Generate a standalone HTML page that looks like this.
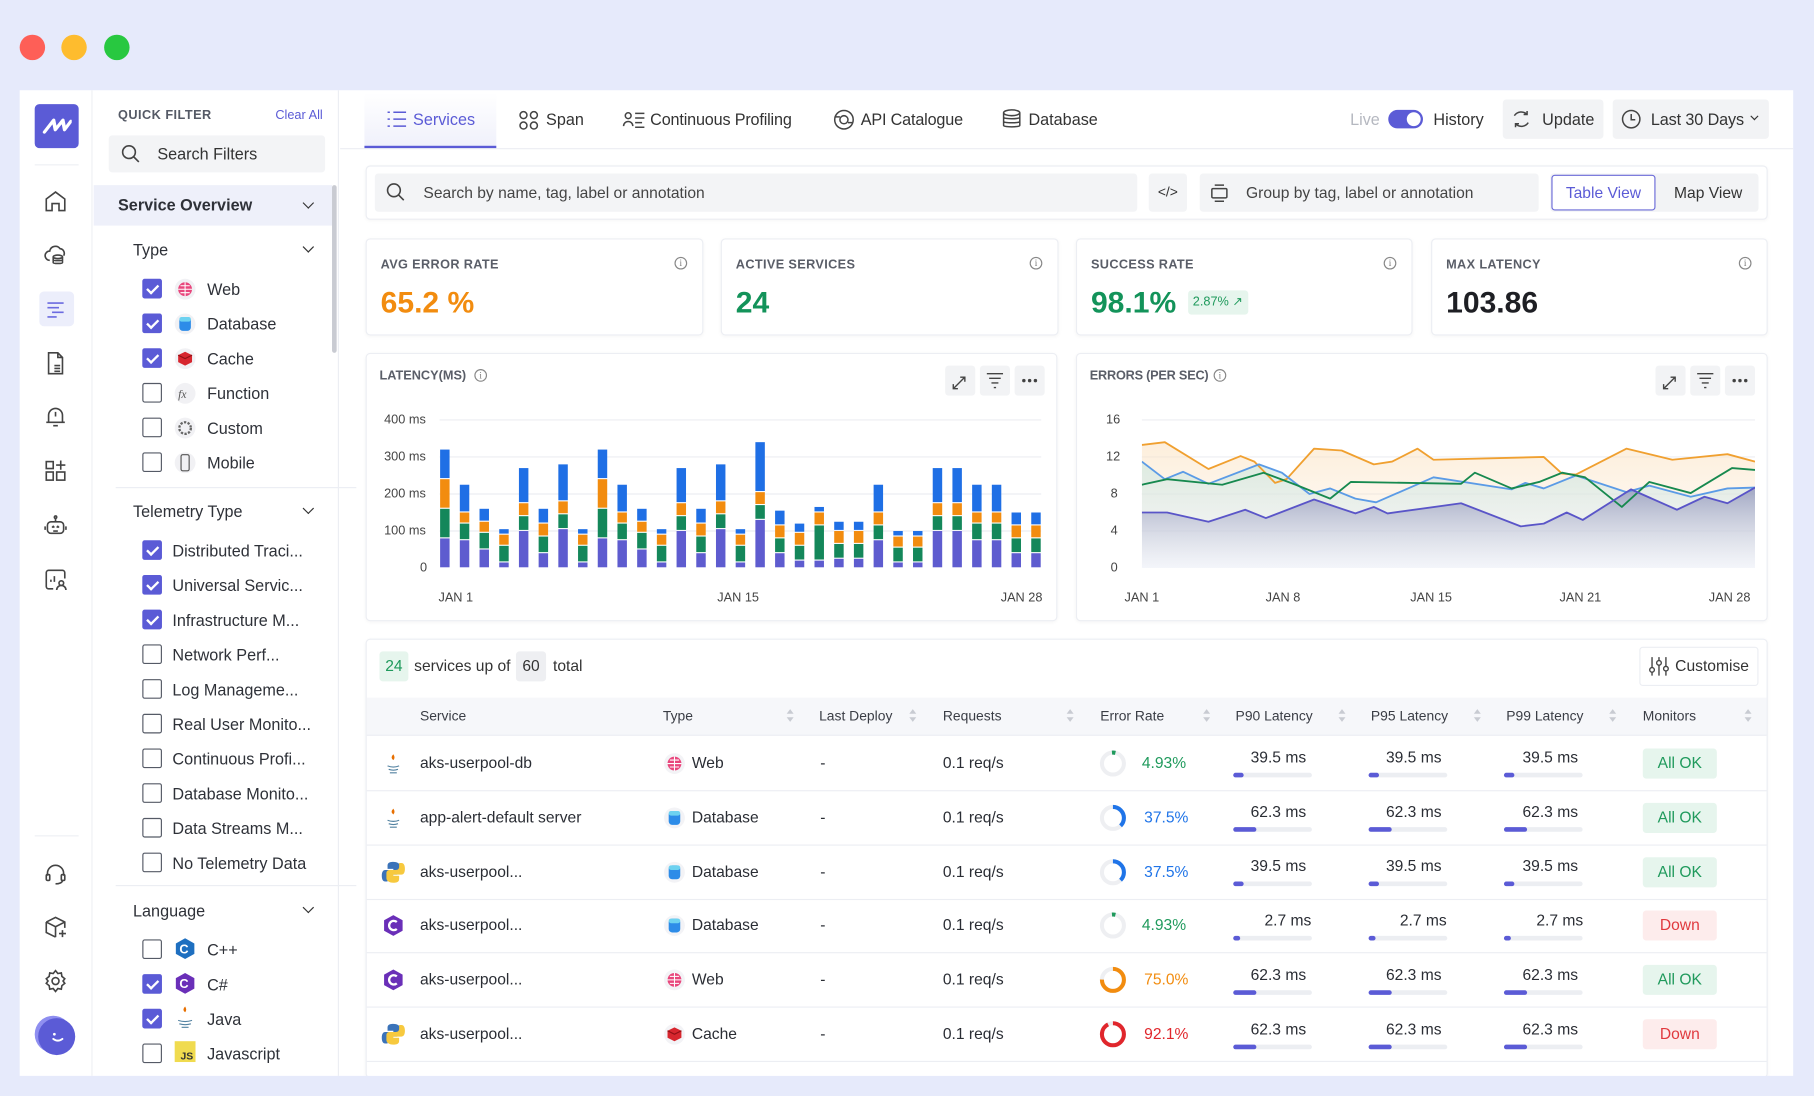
<!DOCTYPE html>
<html><head><meta charset="utf-8">
<style>
*{box-sizing:border-box;margin:0;padding:0}
html,body{width:1814px;height:1096px;overflow:hidden;background:#e6eafb;font-family:"Liberation Sans",sans-serif;color:#2a2d34}
#w{position:absolute;left:0;top:0;width:1568px;height:947px;transform:scale(1.15689);transform-origin:0 0}
.a{position:absolute}
.dot{position:absolute;width:22px;height:22px;border-radius:50%;top:30px}
.app{left:17px;top:78px;width:1533px;height:852px;background:#fff}
.rail{left:17px;top:78px;width:63px;height:852px;border-right:1px solid #eef0f4}
.ic{position:absolute;left:36px;width:24px;height:24px}
.fp{left:81px;top:78px;width:212px;height:852px;border-right:1px solid #eceef3}
.cb{position:absolute;left:123px;width:17px;height:17px;border:1.3px solid #555a66;border-radius:2px;background:#fff}
.cb.on{background:#5b5bd6;border-color:#5b5bd6}
.cb.on:after{content:"";position:absolute;left:4.5px;top:1.5px;width:4px;height:8px;border:solid #fff;border-width:0 2px 2px 0;transform:rotate(45deg)}
.lab{position:absolute;font-size:14px;color:#2e3138}
.hd{position:absolute;left:115px;font-size:14px;color:#2e3138}
.chev{position:absolute;left:263px;width:7px;height:7px;border:solid #333;border-width:0 1.6px 1.6px 0;transform:rotate(45deg)}
.card{position:absolute;background:#fff;border:1px solid #eceef3;border-radius:4px;box-shadow:0 1px 3px rgba(0,0,0,.04)}
.st{font-size:11px;font-weight:bold;color:#5a5e68;letter-spacing:.3px;position:absolute;left:12px;top:16px}
.sv{position:absolute;left:12px;top:39px;font-size:26px;font-weight:bold}
.info{position:absolute;width:11px;height:11px;border:1px solid #888;border-radius:50%;font-size:8px;line-height:9px;text-align:center;color:#777;font-family:"Liberation Serif",serif}
.btn{position:absolute;width:26px;height:26px;background:#f2f3f5;border-radius:3px}
.th{position:absolute;top:612px;font-size:12px;color:#3a3d45}
.sort{position:absolute;top:613px;width:6px;height:12px}
.sort:before,.sort:after{content:"";position:absolute;left:0;border-left:3px solid transparent;border-right:3px solid transparent}
.sort:before{top:0;border-bottom:4px solid #c8cbd2}
.sort:after{top:7px;border-top:4px solid #c8cbd2}
.cell{position:absolute;font-size:13.5px;color:#2a2d34}
.pb{position:absolute;width:68px;height:4px;background:#eceef2;border-radius:2px}
.pb i{position:absolute;left:0;top:0;height:4px;background:#5b5bd6;border-radius:2px}
.badge{position:absolute;left:1420px;width:64px;height:26px;border-radius:3px;font-size:13.5px;text-align:center;line-height:26px}
.ok{background:#e6f5ed;color:#1f9a5c}
.dn{background:#fdecec;color:#e0393e}
.ax{position:absolute;font-size:11px;color:#444}
</style></head><body><div id="w">
<div class="dot" style="left:17px;background:#fe5f57"></div>
<div class="dot" style="left:53px;background:#febc2e"></div>
<div class="dot" style="left:90px;background:#28c840"></div>
<div class="a app"></div>
<div class="a rail"></div>
<div class="a" style="left:30px;top:90px;width:38px;height:38px;background:#5b5bd6;border-radius:4px"></div>
<svg class="a" style="left:36px;top:100px" width="26" height="18" viewBox="0 0 26 18"><path d="M3 14 L9 4 L12 12 L17 4 L20 12 L24 5" fill="none" stroke="#fff" stroke-width="3" stroke-linejoin="round" stroke-linecap="round" transform="skewX(-10) translate(2,0)"/></svg>
<div class="a" style="left:30px;top:142px;width:38px;height:1px;background:#eef0f4"></div>
<svg class="ic" style="top:162px" viewBox="0 0 24 24" fill="none" stroke="#444" stroke-width="1.4"><path d="M4 20V10l8-6 8 6v10h-5v-6h-6v6z"/></svg>
<svg class="ic" style="top:208px" viewBox="0 0 24 24" fill="none" stroke="#444" stroke-width="1.4"><path d="M7 17a4 4 0 0 1 0-8 5 5 0 0 1 9-2 4 4 0 0 1 3 6"/><ellipse cx="14" cy="14" rx="4" ry="1.5"/><path d="M10 14v5c0 1 8 1 8 0v-5M10 16.5c0 1 8 1 8 0"/></svg>
<div class="a" style="left:34px;top:252px;width:30px;height:30px;background:#eceefb;border-radius:4px"></div>
<svg class="ic" style="top:255px" viewBox="0 0 24 24" fill="none" stroke="#6b6be0" stroke-width="1.4"><path d="M5 7h14M5 11h10M9 15h10M5 19h8"/></svg>
<svg class="ic" style="top:302px" viewBox="0 0 24 24" fill="none" stroke="#444" stroke-width="1.4"><path d="M6 3h8l4 4v14H6zM14 3v4h4M11 14h5M11 16.5h5M11 19h5"/></svg>
<svg class="ic" style="top:348px" viewBox="0 0 24 24" fill="none" stroke="#444" stroke-width="1.4"><path d="M6 17V11a6 6 0 0 1 12 0v6H6zM4 17h16M10 20h4M12 8v4"/></svg>
<svg class="ic" style="top:395px" viewBox="0 0 24 24" fill="none" stroke="#444" stroke-width="1.4"><rect x="4" y="4" width="6" height="6"/><rect x="4" y="13" width="6" height="7"/><rect x="13" y="13" width="7" height="7"/><path d="M16.5 3v8M12.5 7h8"/></svg>
<svg class="ic" style="top:443px" viewBox="0 0 24 24" fill="none" stroke="#444" stroke-width="1.4"><rect x="5" y="8" width="14" height="10" rx="3"/><path d="M12 8V5M3 12v3M21 12v3M9 13l1-1 1 1M13 13l1-1 1 1M10 16h4"/><circle cx="12" cy="4" r="1"/></svg>
<svg class="ic" style="top:489px" viewBox="0 0 24 24" fill="none" stroke="#444" stroke-width="1.4"><path d="M10 20H6a2 2 0 0 1-2-2V6a2 2 0 0 1 2-2h12a2 2 0 0 1 2 2v5M8 12v2M11 9v5"/><circle cx="17" cy="15" r="2"/><path d="M13 21a4 4 0 0 1 8 0"/></svg>
<div class="a" style="left:30px;top:722px;width:38px;height:1px;background:#eef0f4"></div>
<svg class="ic" style="top:743px" viewBox="0 0 24 24" fill="none" stroke="#444" stroke-width="1.4"><path d="M5 14v-2a7 7 0 0 1 14 0v2"/><rect x="4" y="13" width="3" height="5" rx="1"/><rect x="17" y="13" width="3" height="5" rx="1"/><path d="M18 18c0 2-3 3-6 3"/></svg>
<svg class="ic" style="top:789px" viewBox="0 0 24 24" fill="none" stroke="#444" stroke-width="1.4"><path d="M4 8l8-4 8 4v5M4 8v9l8 4M4 8l8 4 8-4M12 12v9M18 15v6M15 18h6"/></svg>
<svg class="ic" style="top:836px" viewBox="0 0 24 24" fill="none" stroke="#444" stroke-width="1.4"><circle cx="12" cy="12" r="3"/><path d="M12 3l2 2.5 3-.5 .5 3 2.5 2-1.5 2 1.5 2-2.5 2-.5 3-3-.5-2 2.5-2-2.5-3 .5-.5-3-2.5-2 1.5-2-1.5-2 2.5-2 .5-3 3 .5z"/></svg>
<div class="a" style="left:33px;top:880px;width:32px;height:32px;border-radius:50%;background:#5b5bd6;box-shadow:-3px -2px 0 #8e8ef0"></div>
<svg class="a" style="left:41px;top:888px" width="18" height="16" viewBox="0 0 18 16"><circle cx="6" cy="6" r="1.2" fill="#fff"/><path d="M5 10q4 3 8 0" stroke="#fff" stroke-width="1.6" fill="none" stroke-linecap="round"/></svg>

<div class="a fp"></div>
<div class="a" style="left:102px;top:94px;font-size:11px;font-weight:bold;color:#555a66;letter-spacing:.4px">QUICK FILTER</div>
<div class="a" style="left:238px;top:94px;font-size:11px;color:#5b5bd6">Clear All</div>
<div class="a" style="left:94px;top:117px;width:187px;height:32px;background:#f3f4f6;border-radius:3px"></div>
<svg class="a" style="left:104px;top:124px" width="18" height="18" viewBox="0 0 18 18" fill="none" stroke="#444" stroke-width="1.4"><circle cx="7.5" cy="7.5" r="5.5"/><path d="M11.5 11.5l4.5 4.5"/></svg>
<div class="a" style="left:136px;top:125px;font-size:14px;color:#333">Search Filters</div>
<div class="a" style="left:81px;top:160px;width:206px;height:35px;background:#eef0fa"></div>
<div class="a" style="left:287px;top:160px;width:4px;height:145px;background:#c9cbd2;border-radius:2px"></div>
<div class="a" style="left:102px;top:169px;font-size:14px;font-weight:bold;color:#2e3138">Service Overview</div>
<div class="chev" style="top:172px"></div>

<div class="hd" style="top:208px">Type</div><div class="chev" style="top:210px"></div>
<div class="cb on" style="top:241px"></div><div class="lab" style="left:179px;top:242px">Web</div>
<div class="cb on" style="top:271px"></div><div class="lab" style="left:179px;top:272px">Database</div>
<div class="cb on" style="top:301px"></div><div class="lab" style="left:179px;top:302px">Cache</div>
<div class="cb" style="top:331px"></div><div class="lab" style="left:179px;top:332px">Function</div>
<div class="cb" style="top:361px"></div><div class="lab" style="left:179px;top:362px">Custom</div>
<div class="cb" style="top:391px"></div><div class="lab" style="left:179px;top:392px">Mobile</div>
<svg class="a" style="left:150px;top:240px" width="20" height="170" viewBox="0 0 20 170">
<circle cx="10" cy="10" r="9" fill="#f1f1f4"/><circle cx="10" cy="10" r="6" fill="#e8467c"/><path d="M4 10h12M10 4v12M6 7h8M6 13h8" stroke="#fff" stroke-width=".9"/>
<circle cx="10" cy="40" r="9" fill="#f1f1f4"/><rect x="5" y="34" width="10" height="12" rx="3" fill="#2d8ce8"/><rect x="5" y="34" width="10" height="4" rx="2" fill="#6dd2f0"/>
<circle cx="10" cy="70" r="9" fill="#f1f1f4"/><path d="M4 67l6-3 6 3v6l-6 3-6-3z" fill="#d7262e"/><path d="M4 67l6 3 6-3" stroke="#8f1015" fill="none"/>
<circle cx="10" cy="100" r="9" fill="#f1f1f4"/><text x="4" y="104" font-size="10" font-style="italic" fill="#555" font-family="Liberation Serif">fx</text>
<circle cx="10" cy="130" r="9" fill="#f1f1f4"/><circle cx="10" cy="130" r="5" fill="none" stroke="#666" stroke-width="2" stroke-dasharray="2 1.2"/>
<circle cx="10" cy="160" r="9" fill="#f1f1f4"/><rect x="6.5" y="153" width="7" height="14" rx="1.5" fill="none" stroke="#555"/>
</svg>
<div class="a" style="left:100px;top:421px;width:208px;height:1px;background:#eceef3"></div>
<div class="hd" style="top:434px">Telemetry Type</div><div class="chev" style="top:436px"></div>
<div class="cb on" style="top:467px"></div><div class="lab" style="left:149px;top:468px">Distributed Traci...</div>
<div class="cb on" style="top:497px"></div><div class="lab" style="left:149px;top:498px">Universal Servic...</div>
<div class="cb on" style="top:527px"></div><div class="lab" style="left:149px;top:528px">Infrastructure M...</div>
<div class="cb" style="top:557px"></div><div class="lab" style="left:149px;top:558px">Network Perf...</div>
<div class="cb" style="top:587px"></div><div class="lab" style="left:149px;top:588px">Log Manageme...</div>
<div class="cb" style="top:617px"></div><div class="lab" style="left:149px;top:618px">Real User Monito...</div>
<div class="cb" style="top:647px"></div><div class="lab" style="left:149px;top:648px">Continuous Profi...</div>
<div class="cb" style="top:677px"></div><div class="lab" style="left:149px;top:678px">Database Monito...</div>
<div class="cb" style="top:707px"></div><div class="lab" style="left:149px;top:708px">Data Streams M...</div>
<div class="cb" style="top:737px"></div><div class="lab" style="left:149px;top:738px">No Telemetry Data</div>
<div class="a" style="left:100px;top:765px;width:208px;height:1px;background:#eceef3"></div>
<div class="hd" style="top:779px">Language</div><div class="chev" style="top:781px"></div>
<div class="cb" style="top:812px"></div><div class="lab" style="left:179px;top:813px">C++</div>
<div class="cb on" style="top:842px"></div><div class="lab" style="left:179px;top:843px">C#</div>
<div class="cb on" style="top:872px"></div><div class="lab" style="left:179px;top:873px">Java</div>
<div class="cb" style="top:902px"></div><div class="lab" style="left:179px;top:903px">Javascript</div>
<svg class="a" style="left:150px;top:810px" width="20" height="110" viewBox="0 0 20 110">
<path d="M10 1l8 4.5v9L10 19l-8-4.5v-9z" fill="#1e6fc0"/><text x="5" y="14" font-size="11" font-weight="bold" fill="#fff" font-family="Liberation Sans">C</text>
<path d="M10 31l8 4.5v9L10 49l-8-4.5v-9z" fill="#6a2fb8"/><text x="5" y="44" font-size="11" font-weight="bold" fill="#fff" font-family="Liberation Sans">C</text>
<path d="M10 60q-3 3 0 5q2-2 0-5" fill="#e76f00"/><path d="M4 72q6 2 12 0M5 75q5 1.5 10 0M7 78h6" stroke="#5382a1" fill="none"/>
<rect x="1" y="90" width="18" height="18" fill="#f0db4f"/><text x="6" y="106" font-size="9" font-weight="bold" fill="#333" font-family="Liberation Sans">JS</text>
</svg>

<div class="a" style="left:294px;top:128px;width:1256px;height:1px;background:#eceef3"></div>
<div class="a" style="left:315px;top:80px;width:114px;height:48px;background:linear-gradient(#fff,#f0f1fb);border-bottom:2px solid #5b5bd6"></div>
<svg class="a" style="left:334px;top:95px" width="18" height="16" viewBox="0 0 18 16" fill="none" stroke="#5b5bd6" stroke-width="1.3"><path d="M6 2h11M6 8h11M6 14h11M1 2h2M1 8h2M1 14h2"/></svg>
<div class="a" style="left:357px;top:95px;font-size:14px;color:#5b5bd6">Services</div>
<svg class="a" style="left:448px;top:95px" width="18" height="18" viewBox="0 0 18 18" fill="none" stroke="#444" stroke-width="1.3"><circle cx="4.5" cy="4.5" r="3"/><circle cx="13.5" cy="4.5" r="3"/><circle cx="4.5" cy="13.5" r="3"/><circle cx="13.5" cy="13.5" r="3"/></svg>
<div class="a" style="left:472px;top:95px;font-size:14px;color:#333">Span</div>
<svg class="a" style="left:538px;top:95px" width="20" height="18" viewBox="0 0 20 18" fill="none" stroke="#444" stroke-width="1.3"><circle cx="5" cy="5" r="2.5"/><path d="M1 14a4 4 0 0 1 8 0M11 3h8M11 7h8M11 11h6M11 15h8"/></svg>
<div class="a" style="left:562px;top:95px;font-size:14px;color:#333;letter-spacing:-.15px">Continuous Profiling</div>
<svg class="a" style="left:720px;top:94px" width="19" height="19" viewBox="0 0 19 19" fill="none" stroke="#444" stroke-width="1.3"><circle cx="9.5" cy="9.5" r="8"/><circle cx="9.5" cy="9.5" r="3.5"/><path d="M2 7h4M13 12h4"/></svg>
<div class="a" style="left:744px;top:95px;font-size:14px;color:#333;letter-spacing:-.15px">API Catalogue</div>
<svg class="a" style="left:866px;top:94px" width="17" height="18" viewBox="0 0 17 18" fill="none" stroke="#444" stroke-width="1.3"><ellipse cx="8.5" cy="3.5" rx="7" ry="2.5"/><path d="M1.5 3.5v11c0 1.5 14 1.5 14 0v-11M1.5 7.5c0 1.5 14 1.5 14 0M1.5 11c0 1.5 14 1.5 14 0"/></svg>
<div class="a" style="left:889px;top:95px;font-size:14px;color:#333">Database</div>
<div class="a" style="left:1167px;top:95px;font-size:14px;color:#b5b8c0">Live</div>
<div class="a" style="left:1200px;top:95px;width:30px;height:16px;background:#5b5bd6;border-radius:8px"></div>
<div class="a" style="left:1216px;top:97px;width:12px;height:12px;background:#fff;border-radius:50%"></div>
<div class="a" style="left:1239px;top:95px;font-size:14px;color:#333">History</div>
<div class="a" style="left:1299px;top:86px;width:87px;height:34px;background:#f2f3f5;border-radius:3px"></div>
<svg class="a" style="left:1306px;top:94px" width="18" height="18" viewBox="0 0 18 18" fill="none" stroke="#444" stroke-width="1.3"><path d="M14 5A7 7 0 0 0 3 6M4 13a7 7 0 0 0 11-1M14 2v3h-3M4 16v-3h3"/></svg>
<div class="a" style="left:1333px;top:95px;font-size:14px;color:#333">Update</div>
<div class="a" style="left:1394px;top:86px;width:135px;height:34px;background:#f2f3f5;border-radius:3px"></div>
<svg class="a" style="left:1401px;top:94px" width="18" height="18" viewBox="0 0 18 18" fill="none" stroke="#444" stroke-width="1.3"><circle cx="9" cy="9" r="7.5"/><path d="M9 4.5V9.5h3.5"/></svg>
<div class="a" style="left:1427px;top:95px;font-size:14px;color:#333;letter-spacing:-.1px">Last 30 Days</div>
<div class="a" style="left:1514px;top:98px;width:5px;height:5px;border:solid #333;border-width:0 1.4px 1.4px 0;transform:rotate(45deg)"></div>

<div class="card" style="left:316px;top:143px;width:1212px;height:47px"></div>
<div class="a" style="left:324px;top:150px;width:659px;height:33px;background:#f3f4f6;border-radius:3px"></div>
<svg class="a" style="left:333px;top:157px" width="18" height="18" viewBox="0 0 18 18" fill="none" stroke="#444" stroke-width="1.4"><circle cx="7.5" cy="7.5" r="5.5"/><path d="M11.5 11.5l4.5 4.5"/></svg>
<div class="a" style="left:366px;top:159px;font-size:13.5px;color:#444">Search by name, tag, label or annotation</div>
<div class="a" style="left:993px;top:150px;width:33px;height:33px;background:#f3f4f6;border-radius:3px;font-size:12px;text-align:center;line-height:33px;color:#333">&lt;/&gt;</div>
<div class="a" style="left:1037px;top:150px;width:293px;height:33px;background:#f3f4f6;border-radius:3px"></div>
<svg class="a" style="left:1045px;top:158px" width="18" height="18" viewBox="0 0 18 18" fill="none" stroke="#444" stroke-width="1.3"><rect x="2.5" y="5" width="13" height="8" rx="1"/><path d="M5 2h8M5 16h8"/></svg>
<div class="a" style="left:1077px;top:159px;font-size:13.5px;color:#444">Group by tag, label or annotation</div>
<div class="a" style="left:1340px;top:150px;width:180px;height:33px;background:#f2f3f5;border-radius:3px"></div>
<div class="a" style="left:1341px;top:151px;width:90px;height:31px;background:#fff;border:1.3px solid #6b6bd8;border-radius:3px;font-size:13.5px;color:#5b5bd6;text-align:center;line-height:29px">Table View</div>
<div class="a" style="left:1447px;top:159px;font-size:13.5px;color:#333">Map View</div>

<div class="card" style="left:316px;top:206px;width:292px;height:84px"><div class="st">AVG ERROR RATE</div><div class="sv" style="color:#f28c0f">65.2 %</div><div class="info" style="left:266px;top:15px">i</div></div>
<div class="card" style="left:623px;top:206px;width:292px;height:84px"><div class="st">ACTIVE SERVICES</div><div class="sv" style="color:#13935a">24</div><div class="info" style="left:266px;top:15px">i</div></div>
<div class="card" style="left:930px;top:206px;width:291px;height:84px"><div class="st">SUCCESS RATE</div><div class="sv" style="color:#13935a">98.1%</div><div class="a" style="left:96px;top:44px;width:52px;height:21px;background:#e6f5ed;border-radius:3px;font-size:11px;color:#1f9a5c;line-height:21px;padding-left:4px">2.87% ↗</div><div class="info" style="left:265px;top:15px">i</div></div>
<div class="card" style="left:1237px;top:206px;width:291px;height:84px"><div class="st">MAX LATENCY</div><div class="sv" style="color:#1e1f24">103.86</div><div class="info" style="left:265px;top:15px">i</div></div>

<div class="card" style="left:316px;top:305px;width:598px;height:232px"></div>
<div class="card" style="left:930px;top:305px;width:598px;height:232px"></div>
<div class="a" style="left:328px;top:319px;font-size:11px;font-weight:bold;color:#5a5e68">LATENCY(MS)</div><div class="info" style="left:410px;top:319px">i</div>
<div class="a" style="left:942px;top:319px;font-size:11px;font-weight:bold;color:#5a5e68;letter-spacing:-.2px">ERRORS (PER SEC)</div><div class="info" style="left:1049px;top:319px">i</div>
<div class="btn" style="left:817px;top:316px"></div><div class="btn" style="left:847px;top:316px"></div><div class="btn" style="left:877px;top:316px"></div>
<div class="btn" style="left:1431px;top:316px"></div><div class="btn" style="left:1461px;top:316px"></div><div class="btn" style="left:1491px;top:316px"></div>
<svg class="a" style="left:0;top:0" width="1568" height="947" fill="none" stroke="#444" stroke-width="1.2">
<g id="b"><path d="M824 336l10-10M830 326h4v4M824 332v4h4"/><path d="M853 323h14M855 327h10M857 331h6M859 335h2"/><circle cx="885" cy="329" r=".9" fill="#333"/><circle cx="890" cy="329" r=".9" fill="#333"/><circle cx="895" cy="329" r=".9" fill="#333"/></g>
<use href="#b" x="614"/>
<g stroke="#eceef2" stroke-width="1"><path d="M380 363H900M380 395H900M380 427H900M380 459H900"/><path d="M987 363H1517M987 395H1517M987 427H1517M987 459H1517"/></g>
</svg>
<div class="ax" style="left:332px;top:357px">400 ms</div>
<div class="ax" style="left:332px;top:389px">300 ms</div>
<div class="ax" style="left:332px;top:421px">200 ms</div>
<div class="ax" style="left:332px;top:453px">100 ms</div>
<div class="ax" style="left:363px;top:485px">0</div>
<div class="ax" style="left:379px;top:511px">JAN 1</div>
<div class="ax" style="left:620px;top:511px">JAN 15</div>
<div class="ax" style="left:865px;top:511px">JAN 28</div>
<svg class="a" style="left:375.5px;top:363px" width="528" height="128" viewBox="0 0 31 400" preserveAspectRatio="none">
<g id="bars"></g>
</svg>

<div class="ax" style="left:956px;top:357px">16</div>
<div class="ax" style="left:956px;top:389px">12</div>
<div class="ax" style="left:960px;top:421px">8</div>
<div class="ax" style="left:960px;top:453px">4</div>
<div class="ax" style="left:960px;top:485px">0</div>
<div class="ax" style="left:972px;top:511px">JAN 1</div>
<div class="ax" style="left:1094px;top:511px">JAN 8</div>
<div class="ax" style="left:1219px;top:511px">JAN 15</div>
<div class="ax" style="left:1348px;top:511px">JAN 21</div>
<div class="ax" style="left:1477px;top:511px">JAN 28</div>
<svg class="a" style="left:987px;top:363px" width="530" height="128" viewBox="155 0 1335 16" preserveAspectRatio="none">
<defs>
<linearGradient id="go" x1="0" y1="0" x2="0" y2="1"><stop offset="0" stop-color="#fbe3c4" stop-opacity=".6"/><stop offset="1" stop-color="#fbe3c4" stop-opacity="0"/></linearGradient>
<linearGradient id="gg" x1="0" y1="0" x2="0" y2="1"><stop offset="0" stop-color="#cfe8e0" stop-opacity=".7"/><stop offset="1" stop-color="#dfe9f5" stop-opacity=".2"/></linearGradient>
<linearGradient id="gp" x1="0" y1="0" x2="0" y2="1"><stop offset="0" stop-color="#8a8fb8" stop-opacity=".75"/><stop offset="1" stop-color="#e8eaf4" stop-opacity=".3"/></linearGradient>
</defs>
<path fill="url(#go)" d="M155 2.7L205 2.4L300 5.3L370 3.9L400 4.5L445 6.8L470 6.4L530 3.1L590 3.3L660 4.8L700 4.5L755 3.1L790 4.3L1030 4.0L1070 5.8L1100 5.9L1210 3.1L1310 4.3L1430 3.7L1490 4.5V16H155Z"/>
<path fill="url(#gg)" d="M155 4.5L205 6.4L245 5.6L300 6.9L410 4.8L460 5.7L520 8.0L565 7.4L620 8.5L665 8.9L790 6.2L960 7.5L990 6.8L1030 7.4L1100 6.0L1210 7.8L1260 7.1L1350 8.3L1430 7.4L1490 7.3V16H155Z"/>
<path fill="url(#gp)" d="M155 10L210 10L300 11L380 9.7L425 10.6L530 8.6L620 10.1L660 9.4L690 10.1L850 9L980 11.5L1030 11.2L1080 10L1115 10.8L1220 7.5L1320 9.7L1380 8.3L1430 9L1490 7.3V16H155Z"/>
<g fill="none" stroke-linejoin="round">
<path vector-effect="non-scaling-stroke" stroke="#f0a030" stroke-width="1.6" d="M155 2.7L205 2.4L300 5.3L370 3.9L400 4.5L445 6.8L470 6.4L530 3.1L590 3.3L660 4.8L700 4.5L755 3.1L790 4.3L1030 4.0L1070 5.8L1100 5.9L1210 3.1L1310 4.3L1430 3.7L1490 4.5"/>
<path vector-effect="non-scaling-stroke" stroke="#5b9be6" stroke-width="1.6" d="M155 4.5L205 6.4L245 5.6L300 6.9L410 4.8L460 5.7L520 8.0L565 7.4L620 8.5L665 8.9L790 6.2L960 7.5L990 6.8L1030 7.4L1100 6.0L1210 7.8L1260 7.1L1350 8.3L1430 7.4L1490 7.3"/>
<path vector-effect="non-scaling-stroke" stroke="#17894f" stroke-width="1.6" d="M155 7L210 6.4L330 7L420 5.7L490 7L565 8.5L610 6.7L850 6.9L880 5.7L960 7.4L1020 6.7L1070 5.7L1120 6.2L1200 9.4L1260 6.7L1350 7.9L1440 5.2L1490 5.4"/>
<path vector-effect="non-scaling-stroke" stroke="#5a55c8" stroke-width="1.6" d="M155 10L210 10L300 11L380 9.7L425 10.6L530 8.6L620 10.1L660 9.4L690 10.1L850 9L980 11.5L1030 11.2L1080 10L1115 10.8L1220 7.5L1320 9.7L1380 8.3L1430 9L1490 7.3"/>
</g>
</svg>

<div class="card" style="left:316px;top:552px;width:1212px;height:380px"></div>
<div class="a" style="left:328px;top:563px;width:25px;height:26px;background:#e6f5ed;border-radius:3px;color:#1f9a5c;font-size:13.5px;text-align:center;line-height:26px">24</div>
<div class="a" style="left:358px;top:568px;font-size:13.5px;color:#333">services up of</div>
<div class="a" style="left:446px;top:563px;width:26px;height:26px;background:#eeeff2;border-radius:3px;color:#333;font-size:13.5px;text-align:center;line-height:26px">60</div>
<div class="a" style="left:478px;top:568px;font-size:13.5px;color:#333">total</div>
<div class="a" style="left:1417px;top:559px;width:103px;height:34px;border:1px solid #eceef3;border-radius:3px"></div>
<svg class="a" style="left:1425px;top:567px" width="18" height="18" viewBox="0 0 18 18" fill="none" stroke="#444" stroke-width="1.2"><path d="M3 1v16M9 1v16M15 1v16"/><circle cx="3" cy="12" r="2" fill="#fff"/><circle cx="9" cy="6" r="2" fill="#fff"/><circle cx="15" cy="11" r="2" fill="#fff"/></svg>
<div class="a" style="left:1448px;top:568px;font-size:13.5px;color:#333">Customise</div>
<div class="a" style="left:317px;top:603px;width:1210px;height:33px;background:#f6f7fa;border-bottom:1px solid #eceef3"></div>
<div class="th" style="left:363px">Service</div>
<div class="th" style="left:573px">Type</div><div class="sort" style="left:680px"></div>
<div class="th" style="left:708px">Last Deploy</div><div class="sort" style="left:786px"></div>
<div class="th" style="left:815px">Requests</div><div class="sort" style="left:922px"></div>
<div class="th" style="left:951px">Error Rate</div><div class="sort" style="left:1040px"></div>
<div class="th" style="left:1068px">P90 Latency</div><div class="sort" style="left:1157px"></div>
<div class="th" style="left:1185px">P95 Latency</div><div class="sort" style="left:1274px"></div>
<div class="th" style="left:1302px">P99 Latency</div><div class="sort" style="left:1391px"></div>
<div class="th" style="left:1420px">Monitors</div><div class="sort" style="left:1508px"></div>

<div class="a" style="left:317px;top:683px;width:1210px;height:1px;background:#eceef3"></div>
<div class="a" style="left:317px;top:730px;width:1210px;height:1px;background:#eceef3"></div>
<div class="a" style="left:317px;top:777px;width:1210px;height:1px;background:#eceef3"></div>
<div class="a" style="left:317px;top:823px;width:1210px;height:1px;background:#eceef3"></div>
<div class="a" style="left:317px;top:870px;width:1210px;height:1px;background:#eceef3"></div>
<div class="a" style="left:317px;top:917px;width:1210px;height:1px;background:#eceef3"></div>

<svg class="a" style="left:0;top:0" width="1568" height="947">
<defs>
<g id="java"><path d="M0-9q-3 3 0 5q2-2 0-5" fill="#e76f00"/><path d="M-5 1q5 2 10 0M-4 4q4 1.5 8 0M-3 7h6" stroke="#5382a1" fill="none" stroke-width="1"/></g>
<g id="py"><path d="M0-9c-5 0-5 2-5 4v2h5v1h-7c-2 0-3 2-3 5s1 5 3 5h2v-3c0-2 1-3 3-3h5c2 0 3-1 3-3v-4c0-2-2-4-6-4z" fill="#3b73b9"/><path d="M0 9c5 0 5-2 5-4v-2h-5v-1h7c2 0 3-2 3-5s-1-5-3-5h-2v3c0 2-1 3-3 3h-5c-2 0-3 1-3 3v4c0 2 2 4 6 4z" fill="#f7c93e"/></g>
<g id="cs"><path d="M0-9l8 4.5v9L0 9l-8-4.5v-9z" fill="#6a2fb8"/><path d="M3-3a4 4 0 1 0 0 6" stroke="#fff" stroke-width="2" fill="none"/></g>
<g id="web"><circle r="9" fill="#f3f3f6"/><circle r="6" fill="#e8467c"/><path d="M-6 0h12M0-6v12M-4-3h8M-4 3h8" stroke="#fff" stroke-width=".9"/></g>
<g id="db"><circle r="9" fill="#f3f3f6"/><rect x="-5" y="-6" width="10" height="12" rx="3" fill="#2d8ce8"/><rect x="-5" y="-6" width="10" height="4" rx="2" fill="#6dd2f0"/></g>
<g id="cache"><circle r="9" fill="#f3f3f6"/><path d="M-6-3l6-3 6 3v6l-6 3-6-3z" fill="#d7262e"/><path d="M-6-3l6 3 6-3" stroke="#8f1015" fill="none"/></g>
</defs>
<use href="#java" x="340" y="661"/><use href="#java" x="340" y="708"/><use href="#py" x="340" y="754"/><use href="#cs" x="340" y="800"/><use href="#cs" x="340" y="847"/><use href="#py" x="340" y="894"/>
<use href="#web" x="583" y="660"/><use href="#db" x="583" y="707"/><use href="#db" x="583" y="754"/><use href="#db" x="583" y="800"/><use href="#web" x="583" y="847"/><use href="#cache" x="583" y="894"/>
<g fill="none" stroke-width="3.5">
<circle cx="962" cy="660" r="9.5" stroke="#eeeff2"/><circle cx="962" cy="660" r="9.5" stroke="#1f9a5c" stroke-dasharray="3 60" transform="rotate(-95 962 660)"/>
<circle cx="962" cy="707" r="9.5" stroke="#eeeff2"/><circle cx="962" cy="707" r="9.5" stroke="#1f74e8" stroke-dasharray="22.4 60" transform="rotate(-90 962 707)"/>
<circle cx="962" cy="754" r="9.5" stroke="#eeeff2"/><circle cx="962" cy="754" r="9.5" stroke="#1f74e8" stroke-dasharray="22.4 60" transform="rotate(-90 962 754)"/>
<circle cx="962" cy="800" r="9.5" stroke="#eeeff2"/><circle cx="962" cy="800" r="9.5" stroke="#1f9a5c" stroke-dasharray="3 60" transform="rotate(-95 962 800)"/>
<circle cx="962" cy="847" r="9.5" stroke="#eeeff2"/><circle cx="962" cy="847" r="9.5" stroke="#f28c0f" stroke-dasharray="44.8 60" transform="rotate(-90 962 847)"/>
<circle cx="962" cy="894" r="9.5" stroke="#eeeff2"/><circle cx="962" cy="894" r="9.5" stroke="#e0262c" stroke-dasharray="55 60" transform="rotate(-90 962 894)"/>
</g>
</svg>

<div class="cell" style="left:363px;top:652px">aks-userpool-db</div>
<div class="cell" style="left:363px;top:699px">app-alert-default server</div>
<div class="cell" style="left:363px;top:746px">aks-userpool...</div>
<div class="cell" style="left:363px;top:792px">aks-userpool...</div>
<div class="cell" style="left:363px;top:839px">aks-userpool...</div>
<div class="cell" style="left:363px;top:886px">aks-userpool...</div>
<div class="cell" style="left:598px;top:652px">Web</div>
<div class="cell" style="left:598px;top:699px">Database</div>
<div class="cell" style="left:598px;top:746px">Database</div>
<div class="cell" style="left:598px;top:792px">Database</div>
<div class="cell" style="left:598px;top:839px">Web</div>
<div class="cell" style="left:598px;top:886px">Cache</div>
<div class="cell" style="left:709px;top:652px">-</div><div class="cell" style="left:709px;top:699px">-</div><div class="cell" style="left:709px;top:746px">-</div><div class="cell" style="left:709px;top:792px">-</div><div class="cell" style="left:709px;top:839px">-</div><div class="cell" style="left:709px;top:886px">-</div>
<div class="cell" style="left:815px;top:652px">0.1 req/s</div><div class="cell" style="left:815px;top:699px">0.1 req/s</div><div class="cell" style="left:815px;top:746px">0.1 req/s</div><div class="cell" style="left:815px;top:792px">0.1 req/s</div><div class="cell" style="left:815px;top:839px">0.1 req/s</div><div class="cell" style="left:815px;top:886px">0.1 req/s</div>
<div class="cell" style="left:987px;top:652px;color:#1f9a5c">4.93%</div>
<div class="cell" style="left:989px;top:699px;color:#1f74e8">37.5%</div>
<div class="cell" style="left:989px;top:746px;color:#1f74e8">37.5%</div>
<div class="cell" style="left:987px;top:792px;color:#1f9a5c">4.93%</div>
<div class="cell" style="left:989px;top:839px;color:#f28c0f">75.0%</div>
<div class="cell" style="left:989px;top:886px;color:#e0262c">92.1%</div>

<div class="cell" style="left:1081px;top:647px">39.5 ms</div><div class="pb" style="left:1066px;top:668px"><i style="width:9px"></i></div>
<div class="cell" style="left:1198px;top:647px">39.5 ms</div><div class="pb" style="left:1183px;top:668px"><i style="width:9px"></i></div>
<div class="cell" style="left:1316px;top:647px">39.5 ms</div><div class="pb" style="left:1300px;top:668px"><i style="width:9px"></i></div>
<div class="cell" style="left:1081px;top:694px">62.3 ms</div><div class="pb" style="left:1066px;top:715px"><i style="width:20px"></i></div>
<div class="cell" style="left:1198px;top:694px">62.3 ms</div><div class="pb" style="left:1183px;top:715px"><i style="width:20px"></i></div>
<div class="cell" style="left:1316px;top:694px">62.3 ms</div><div class="pb" style="left:1300px;top:715px"><i style="width:20px"></i></div>
<div class="cell" style="left:1081px;top:741px">39.5 ms</div><div class="pb" style="left:1066px;top:762px"><i style="width:9px"></i></div>
<div class="cell" style="left:1198px;top:741px">39.5 ms</div><div class="pb" style="left:1183px;top:762px"><i style="width:9px"></i></div>
<div class="cell" style="left:1316px;top:741px">39.5 ms</div><div class="pb" style="left:1300px;top:762px"><i style="width:9px"></i></div>
<div class="cell" style="left:1093px;top:788px">2.7 ms</div><div class="pb" style="left:1066px;top:809px"><i style="width:6px"></i></div>
<div class="cell" style="left:1210px;top:788px">2.7 ms</div><div class="pb" style="left:1183px;top:809px"><i style="width:6px"></i></div>
<div class="cell" style="left:1328px;top:788px">2.7 ms</div><div class="pb" style="left:1300px;top:809px"><i style="width:6px"></i></div>
<div class="cell" style="left:1081px;top:835px">62.3 ms</div><div class="pb" style="left:1066px;top:856px"><i style="width:20px"></i></div>
<div class="cell" style="left:1198px;top:835px">62.3 ms</div><div class="pb" style="left:1183px;top:856px"><i style="width:20px"></i></div>
<div class="cell" style="left:1316px;top:835px">62.3 ms</div><div class="pb" style="left:1300px;top:856px"><i style="width:20px"></i></div>
<div class="cell" style="left:1081px;top:882px">62.3 ms</div><div class="pb" style="left:1066px;top:903px"><i style="width:20px"></i></div>
<div class="cell" style="left:1198px;top:882px">62.3 ms</div><div class="pb" style="left:1183px;top:903px"><i style="width:20px"></i></div>
<div class="cell" style="left:1316px;top:882px">62.3 ms</div><div class="pb" style="left:1300px;top:903px"><i style="width:20px"></i></div>
<div class="badge ok" style="top:647px">All OK</div>
<div class="badge ok" style="top:694px">All OK</div>
<div class="badge ok" style="top:741px">All OK</div>
<div class="badge dn" style="top:787px">Down</div>
<div class="badge ok" style="top:834px">All OK</div>
<div class="badge dn" style="top:881px">Down</div>
<div class="a" style="left:0;top:930px;width:1568px;height:17px;background:#e6eafb"></div>
</div>
<script>
var d=[[80,160,240,320],[75,120,150,225],[50,95,125,160],[15,60,90,105],[100,140,175,270],[40,85,120,160],[105,145,180,280],[15,60,90,105],[80,160,240,320],[75,120,150,225],[50,95,125,160],[15,60,90,105],[100,140,175,270],[40,85,120,160],[105,145,180,280],[15,60,90,105],[130,170,205,340],[40,80,115,155],[20,60,95,120],[20,115,150,165],[25,65,100,125],[25,65,100,125],[75,115,150,225],[15,55,85,100],[15,55,85,100],[100,140,175,270],[100,140,175,270],[75,120,150,225],[75,120,150,225],[40,80,115,150],[40,80,115,150]];
var c=["#5e5ccf","#14875a","#f28c0f","#1f6fe5"],s="";
d.forEach(function(b,i){var p=0;b.forEach(function(v,k){var h=v-p-3;if(k==0)h=v-2;s+='<rect x="'+(i+0.26)+'" y="'+(400-v)+'" width="0.48" height="'+Math.max(h,1)+'" fill="'+c[k]+'"/>';p=v;});});
document.getElementById("bars").innerHTML=s;
</script>
</body></html>
